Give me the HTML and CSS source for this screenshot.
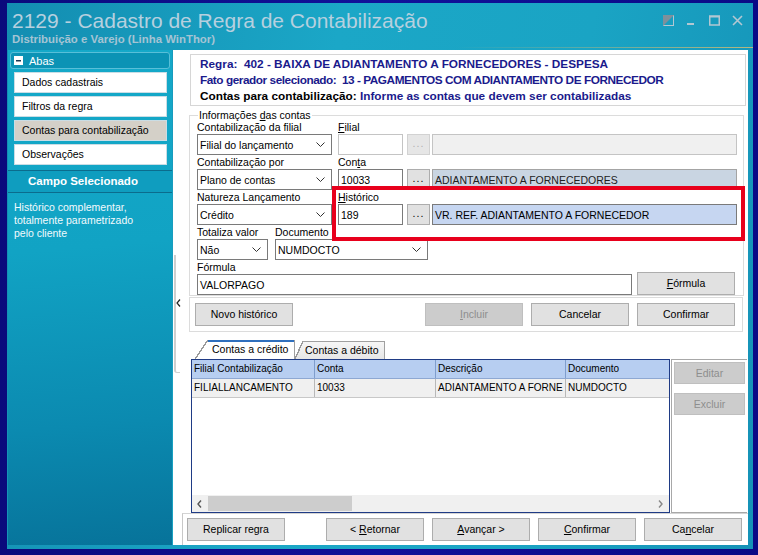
FILE: index.html
```html
<!DOCTYPE html>
<html lang="pt-BR">
<head>
  <meta charset="UTF-8">
  <title>2129 - Cadastro de Regra de Contabilização</title>
  <link rel="stylesheet" href="styles.css">
</head>
<body>
<div class="frame">
  <div class="window">
    <div class="titlebar">
      <div class="title-text">
        <div class="title">2129 - Cadastro de Regra de Contabilização</div>
        <div class="subtitle">Distribuição e Varejo (Linha WinThor)</div>
      </div>
      <div class="win-ctrls">
        <svg width="11" height="11" viewBox="0 0 11 11"><rect x="0.5" y="0.5" width="10" height="10" fill="none" stroke="#b3c7d2"/><polygon points="0,0 11,0 0,11" fill="#7f909b"/></svg>
        <svg width="11" height="11" viewBox="0 0 11 11"><rect x="1" y="8" width="7" height="2" fill="#b3c7d2"/></svg>
        <svg width="11" height="11" viewBox="0 0 11 11"><rect x="0.75" y="1.25" width="9.5" height="8.75" fill="none" stroke="#b3c7d2" stroke-width="1.5"/><rect x="0" y="0.5" width="11" height="2" fill="#b3c7d2"/></svg>
        <svg width="11" height="11" viewBox="0 0 11 11"><path d="M1 1 L10 10 M10 1 L1 10" stroke="#b3c7d2" stroke-width="1.6"/></svg>
      </div>
    </div>

    <div class="body">
      <div class="side">
        <div class="abas-head"><span class="minus-box"></span>Abas</div>
        <div class="abas">
          <div class="aba">Dados cadastrais</div>
          <div class="aba">Filtros da regra</div>
          <div class="aba sel">Contas para contabilização</div>
          <div class="aba">Observações</div>
        </div>
        <div class="campo-head">Campo Selecionado</div>
        <div class="campo-desc">Histórico complementar,<br>totalmente parametrizado<br>pelo cliente</div>
      </div>

      <div class="main">
        <div class="splitter">
          <div class="split-bar">
            <svg width="5" height="8" viewBox="0 0 5 8"><path d="M4 0.5 L1 4 L4 7.5" fill="none" stroke="#222" stroke-width="1.2"/></svg>
          </div>
        </div>

        <div class="content">
          <div class="info-box">
            <div class="navy">Regra:&nbsp; 402 - BAIXA DE ADIANTAMENTO A FORNECEDORES - DESPESA</div>
            <div class="navy tight">Fato gerador selecionado:&nbsp; 13 - PAGAMENTOS COM ADIANTAMENTO DE FORNECEDOR</div>
            <div>Contas para contabilização: <span class="navy">Informe as contas que devem ser contabilizadas</span></div>
          </div>

          <div class="group">
            <div class="group-title">Informações <u>d</u>as contas</div>

            <div class="frow">
              <div class="fld w135">
                <div class="lbl">Contabilização da filial</div>
                <div class="combo"><span>Filial do lançamento</span><svg width="9" height="5" viewBox="0 0 9 5"><path d="M0.5 0.5 L4.5 4.5 L8.5 0.5" fill="none" stroke="#333"/></svg></div>
              </div>
              <div class="fld gap6">
                <div class="lbl"><u>F</u>ilial</div>
                <div class="lookup">
                  <div class="edit w65 off"></div>
                  <div class="dots off">...</div>
                  <div class="desc off"></div>
                </div>
              </div>
            </div>

            <div class="frow">
              <div class="fld w135">
                <div class="lbl">Contabilização por</div>
                <div class="combo"><span>Plano de contas</span><svg width="9" height="5" viewBox="0 0 9 5"><path d="M0.5 0.5 L4.5 4.5 L8.5 0.5" fill="none" stroke="#333"/></svg></div>
              </div>
              <div class="fld gap6">
                <div class="lbl">Con<u>t</u>a</div>
                <div class="lookup">
                  <div class="edit w65">10033</div>
                  <div class="dots">...</div>
                  <div class="desc steel">ADIANTAMENTO A FORNECEDORES</div>
                </div>
              </div>
            </div>

            <div class="frow">
              <div class="fld w135">
                <div class="lbl">Natureza Lançamento</div>
                <div class="combo"><span>Crédito</span><svg width="9" height="5" viewBox="0 0 9 5"><path d="M0.5 0.5 L4.5 4.5 L8.5 0.5" fill="none" stroke="#333"/></svg></div>
              </div>
              <div class="fld gap6">
                <div class="lbl"><u>H</u>istórico</div>
                <div class="lookup">
                  <div class="edit w65">189</div>
                  <div class="dots">...</div>
                  <div class="desc blue">VR. REF. ADIANTAMENTO A FORNECEDOR</div>
                </div>
              </div>
            </div>

            <div class="frow">
              <div class="fld w71">
                <div class="lbl">Totaliza valor</div>
                <div class="combo"><span>Não</span><svg width="9" height="5" viewBox="0 0 9 5"><path d="M0.5 0.5 L4.5 4.5 L8.5 0.5" fill="none" stroke="#333"/></svg></div>
              </div>
              <div class="fld w153 gap7">
                <div class="lbl">Documento</div>
                <div class="combo"><span>NUMDOCTO</span><svg width="9" height="5" viewBox="0 0 9 5"><path d="M0.5 0.5 L4.5 4.5 L8.5 0.5" fill="none" stroke="#333"/></svg></div>
              </div>
            </div>

            <div class="frow">
              <div class="fld w435">
                <div class="lbl">Fórmula</div>
                <div class="edit">VALORPAGO</div>
              </div>
              <div class="btn formula"><u>F</u>órmula</div>
            </div>
          </div>

          <div class="btn-box">
            <div class="btn">Novo histórico</div>
            <div class="spacer"></div>
            <div class="btn dis"><u>I</u>ncluir</div>
            <div class="btn">Cancelar</div>
            <div class="btn">Confirmar</div>
          </div>

          <div class="tabs">
            <div class="tab active">Contas a crédito</div>
            <div class="tab">Contas a débito</div>
          </div>

          <div class="grid-area">
            <div class="grid">
              <div class="grow ghead">
                <div class="cell c1">Filial Contabilização</div>
                <div class="cell c2">Conta</div>
                <div class="cell c3">Descrição</div>
                <div class="cell c4">Documento</div>
              </div>
              <div class="grow gdata">
                <div class="cell c1">FILIALLANCAMENTO</div>
                <div class="cell c2">10033</div>
                <div class="cell c3">ADIANTAMENTO A FORNE</div>
                <div class="cell c4">NUMDOCTO</div>
              </div>
              <div class="gfill"></div>
              <div class="hscroll">
                <svg width="5" height="8" viewBox="0 0 5 8"><path d="M4 0.5 L1 4 L4 7.5" fill="none" stroke="#555" stroke-width="1.4"/></svg>
                <div class="thumb"></div>
                <div class="spacer"></div>
                <svg width="5" height="8" viewBox="0 0 5 8"><path d="M1 0.5 L4 4 L1 7.5" fill="none" stroke="#888" stroke-width="1.4"/></svg>
              </div>
            </div>
            <div class="grid-side">
              <div class="btn small dis">Editar</div>
              <div class="btn small dis">Excluir</div>
            </div>
          </div>

          <div class="bottom-bar">
            <div class="btn">Replicar regra</div>
            <div class="spacer"></div>
            <div class="btn">&lt; <u>R</u>etornar</div>
            <div class="btn"><u>A</u>vançar &gt;</div>
            <div class="btn"><u>C</u>onfirmar</div>
            <div class="btn">Ca<u>n</u>celar</div>
          </div>
        </div>
      </div>
    </div>
  </div>
</div>

<div class="highlight"></div>
</body>
</html>
```

FILE: styles.css
```css
* {
  box-sizing: border-box;
}
body {
  margin: 0;
  width: 758px;
  height: 555px;
  overflow: hidden;
  font-family: "Liberation Sans", Arial, sans-serif;
  font-size: 10.5px;
  color: #000;
  background: #0c0c86;
}
u {
  text-decoration: underline;
  text-underline-offset: 1px;
}

/* moldura da janela */
.frame {
  height: 555px;
  padding: 3px 5px 6px 7px;
  background: linear-gradient(to right, #0a0a7c, #11119a 50%, #0a0a86);
}
.window {
  height: 546px;
  display: flex;
  flex-direction: column;
  background: linear-gradient(100deg, #138db1 0%, #1ba7c7 40%, #1aa4c4 70%, #1592b7 100%);
}
.titlebar {
  height: 45px;
  display: flex;
  justify-content: space-between;
  padding: 6px 0 0 5px;
  border-bottom: 1px solid;
  border-image: linear-gradient(to right, rgba(180,185,120,0) 60%, #b6b87e) 1;
}
.title {
  font-size: 21px;
  line-height: 24px;
  color: #b6d0df;
}
.subtitle {
  font-size: 11.4px;
  font-weight: bold;
  line-height: 13px;
  color: #a5c4d4;
}
.win-ctrls {
  display: flex;
  gap: 12px;
  padding: 6px 10px 0 0;
}

.body {
  flex: 1;
  display: flex;
}

/* painel lateral */
.side {
  width: 164px;
  margin: 2px 0 4px 1px;
  background: linear-gradient(175deg, #15a9c9 0%, #11a3c4 40%, #0b8ab0 75%, #07739a 100%);
  color: #fff;
}
.abas-head {
  margin: 2px 2px 0 2px;
  height: 17px;
  border: 1px solid #58bfd8;
  border-radius: 3px;
  background: #0b93b5;
  display: flex;
  align-items: center;
  padding-left: 3px;
  font-size: 11px;
}
.minus-box {
  width: 9px;
  height: 9px;
  margin-right: 6px;
  background: #fff linear-gradient(#1a3550, #1a3550) center / 5px 1.5px no-repeat;
}
.abas {
  padding: 3px 0 0 6px;
  display: flex;
  flex-direction: column;
  gap: 3px;
}
.aba {
  width: 153px;
  height: 21px;
  line-height: 19px;
  background: #fff;
  border: 1px solid #c9dde5;
  color: #000;
  padding-left: 7px;
}
.aba.sel {
  background: #d4d0c8;
}
.campo-head {
  margin-top: 5px;
  height: 23px;
  border-top: 1px solid #0b6c8d;
  border-bottom: 1px solid #0b6c8d;
  background: #0f9dbf;
  font-size: 11.5px;
  font-weight: bold;
  line-height: 21px;
  padding-left: 20px;
}
.campo-desc {
  padding: 8px 6px;
  line-height: 13px;
  color: #f2fafd;
}

/* area principal */
.main {
  width: 575px;
  margin: 2px 0 4px 1px;
  background: #fff;
  display: flex;
}
.splitter {
  width: 9px;
}
.split-bar {
  margin: 205px 0 0 1px;
  width: 6px;
  height: 118px;
  border-left: 2px solid #cfcfcf;
  border-bottom: 1px solid #cfcfcf;
  border-radius: 0 0 0 3px;
  padding-top: 42px;
}
.content {
  width: 566px;
  display: flex;
  flex-direction: column;
}
.spacer {
  flex: 1;
}

.info-box {
  margin: 4px 2px 0 8px;
  height: 52px;
  border: 1px solid #d6d6d6;
  padding: 1px 0 0 9px;
  font-size: 11.8px;
  font-weight: bold;
  line-height: 16px;
  white-space: nowrap;
}
.navy {
  color: #1a1a8c;
}
.tight {
  letter-spacing: -0.45px;
}

/* grupo de campos */
.group {
  margin: 9px 4px 0 7px;
  height: 181px;
  border: 1px solid #dcdcdc;
  padding-left: 7px;
}
.group-title {
  width: max-content;
  margin: -8px 0 -2px 1px;
  padding: 0 1px;
  background: #fff;
  line-height: 14px;
}
.frow {
  display: flex;
  height: 35px;
}
.fld {
  display: flex;
  flex-direction: column;
}
.lbl {
  height: 14px;
  line-height: 14px;
  white-space: nowrap;
}
.w135 { width: 135px; }
.w71 { width: 71px; }
.w153 { width: 153px; }
.w435 { width: 435px; }
.w65 { width: 65px; }
.gap6 { margin-left: 6px; }
.gap7 { margin-left: 7px; }

.combo,
.edit,
.desc {
  height: 21px;
  border: 1px solid #7a7a7a;
  background: #fff;
  display: flex;
  align-items: center;
  padding-left: 2px;
  white-space: nowrap;
  overflow: hidden;
}
.combo {
  justify-content: space-between;
  padding-right: 6px;
}
.lookup {
  display: flex;
}
.dots {
  width: 23px;
  height: 21px;
  margin-left: 4px;
  background: #e1e1e1;
  border: 1px solid #adadad;
  text-align: center;
  line-height: 17px;
  letter-spacing: 1px;
}
.desc {
  width: 305px;
  margin-left: 2px;
}
.edit.off,
.desc.off {
  border-color: #c4c4c4;
}
.desc.off {
  background: #f0f0f0;
}
.dots.off {
  background: #e6e6e6;
  border-color: #d2d2d2;
  color: #b0b0b0;
}
.desc.steel {
  background: #c9d5e2;
  border-color: #a4a4a4;
  color: #222;
}
.desc.blue {
  background: #c6d6f1;
}

/* botoes */
.btn {
  width: 98px;
  height: 23px;
  background: #e1e1e1;
  border: 1px solid #adadad;
  text-align: center;
  line-height: 21px;
  white-space: nowrap;
}
.btn.dis {
  background: #cccccc;
  border-color: #bfbfbf;
  color: #8e8e8e;
}
.btn.formula {
  margin-left: 5px;
  align-self: flex-end;
}
.btn-box {
  margin: 1px 5px 0 7px;
  height: 35px;
  border: 1px solid #dcdcdc;
  display: flex;
  align-items: center;
  gap: 8px;
  padding: 0 7px 0 5px;
}

/* abas da grade */
.tabs {
  margin: 7px 0 0 13px;
  height: 20px;
  display: flex;
  align-items: flex-end;
}
.tab {
  height: 19px;
  line-height: 19px;
  padding-left: 17px;
  width: 100px;
  border-right: 1px solid #a0a0a0;
  background:
    linear-gradient(#2f6fbd, #2f6fbd) 13px 0 / 100% 2px no-repeat,
    linear-gradient(to bottom right, #fff 0 calc(50% - 0.7px), #9a9a9a calc(50% - 0.7px) calc(50% + 0.7px), transparent calc(50% + 0.7px)) 0 0 / 13px 100% no-repeat;
  background-color: #fff;
}
.tab + .tab {
  width: 90px;
  height: 18px;
  line-height: 18px;
  padding-left: 10px;
  background:
    linear-gradient(#a0a0a0, #a0a0a0) 8px 0 / 100% 1px no-repeat,
    linear-gradient(to bottom right, #fff 0 calc(50% - 0.7px), #9a9a9a calc(50% - 0.7px) calc(50% + 0.7px), transparent calc(50% + 0.7px)) 0 0 / 8px 100% no-repeat,
    linear-gradient(#f7f7f7, #e6e6e6);
}

/* grade */
.grid-area {
  display: flex;
  height: 154px;
  margin-left: 9px;
}
.grid {
  width: 479px;
  border: 1px solid #1f3b85;
  display: flex;
  flex-direction: column;
}
.grow {
  display: flex;
  height: 19px;
}
.cell {
  padding-left: 2px;
  font-size: 10px;
  line-height: 18px;
  white-space: nowrap;
  overflow: hidden;
}
.c1 { width: 123px; }
.c2 { width: 121px; }
.c3 { width: 130px; }
.c4 { flex: 1; }
.ghead {
  background: #b7cef1;
  border-bottom: 1px solid #8ea8d2;
}
.ghead .cell {
  border-right: 1px solid #7f9dcc;
}
.gdata {
  background: #f0f0f0;
  border-bottom: 1px solid #c8c8c8;
}
.gdata .cell {
  border-right: 1px solid #b8b8b8;
}
.ghead .c4,
.gdata .c4 {
  border-right: none;
}
.gfill {
  flex: 1;
}
.hscroll {
  height: 17px;
  background: #f0f0f0;
  display: flex;
  align-items: center;
  padding: 0 6px 0 5px;
}
.thumb {
  width: 144px;
  height: 15px;
  margin-left: 6px;
  background: #cdcdcd;
}
.grid-side {
  width: 76px;
  margin-left: 1px;
  border: 1px solid #a8a8a8;
  border-right: none;
  padding: 2px 0 0 2px;
  display: flex;
  flex-direction: column;
  gap: 9px;
}
.btn.small {
  width: 71px;
  height: 22px;
  line-height: 20px;
}

.bottom-bar {
  height: 32px;
  border-top: 1px solid #d4d4d4;
  border-left: 1px solid #c8c8c8;
  display: flex;
  align-items: center;
  gap: 8px;
  padding: 0 6px 0 4px;
}

/* destaque vermelho sobre o campo Histórico */
.highlight {
  position: absolute;
  left: 332px;
  top: 186px;
  width: 413px;
  height: 55px;
  border: 4px solid #e8001c;
}
```
